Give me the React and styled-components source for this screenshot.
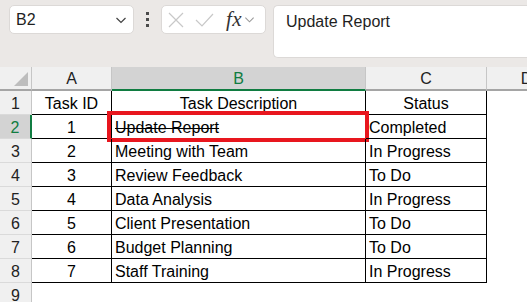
import React from 'react';
import styled, {createGlobalStyle} from 'styled-components';

// Excel-like sheet: formula bar on top, grid of cells below

const GlobalStyle = createGlobalStyle`
  html, body {
    margin: 0;
    padding: 0;
    background: #ffffff;
    overflow: hidden;
  }
  body {
    font-family: "Liberation Sans", Arial, sans-serif;
  }
`

const Page = styled.div`
  width: 527px;
  height: 302px;
  overflow: hidden;
  display: flex;
  flex-direction: column;
`

// ---- formula bar ----

const Toolbar = styled.div`
  height: 67px;
  flex-shrink: 0;
  background: #ebe8e6;
  display: flex;
  align-items: flex-start;
  padding: 5px 0 0 9px;
  box-sizing: border-box;
`

const NameBox = styled.div`
  width: 125px;
  height: 29px;
  box-sizing: border-box;
  background: #fff;
  border: 1px solid #dcd9d7;
  border-radius: 5px;
  display: flex;
  align-items: center;
  justify-content: space-between;
  padding: 1px 6px 0 6px;
  font-size: 16px;
  color: #1f1f1f;
`

const Dots = styled.div`
  width: 27px;
  height: 29px;
  display: flex;
  flex-direction: column;
  align-items: center;
  justify-content: center;
  gap: 3px;

  span {
    width: 3px;
    height: 3px;
    background: #4a4a4a;
  }
`

const FxBox = styled.div`
  width: 105px;
  height: 29px;
  box-sizing: border-box;
  background: #fff;
  border: 1px solid #dcd9d7;
  border-radius: 5px;
  display: flex;
  align-items: center;
  padding-left: 6px;
  gap: 11px;
`

const FxText = styled.span`
  font-family: "Liberation Serif", "Times New Roman", serif;
  font-style: italic;
  font-size: 21px;
  color: #333;
  margin-left: 1px;
  letter-spacing: 0.5px;
`

const FxChevron = styled.span`
  display: flex;
  margin-left: -9px;
`

const FormulaInput = styled.div`
  margin-left: 7px;
  flex: 1;
  height: 53px;
  box-sizing: border-box;
  background: #fff;
  border: 1px solid #dcd9d7;
  border-right: none;
  border-radius: 5px 0 0 5px;
  padding: 7px 12px;
  font-size: 16px;
  color: #1f1f1f;
`

const Chevron = ({color = '#424242', size = 12}) => (
  <svg width={size} height={size} viewBox="0 0 12 12" fill="none">
    <path d="M1.5 4 L6 8.5 L10.5 4" stroke={color} strokeWidth="1.2" />
  </svg>
)

const CancelIcon = () => (
  <svg width="16" height="16" viewBox="0 0 16 16" fill="none">
    <path d="M1 1 L15 15 M15 1 L1 15" stroke="#c8c8c8" strokeWidth="1.2" />
  </svg>
)

const CheckIcon = () => (
  <svg width="19" height="16" viewBox="0 0 19 16" fill="none">
    <path d="M1 8 L7 14 L18 2" stroke="#c8c8c8" strokeWidth="1.2" />
  </svg>
)

// ---- sheet grid ----

const Sheet = styled.div`
  display: grid;
  grid-template-columns: 32px 80px 254px 121px 80px;
  grid-auto-rows: 24px;
  font-size: 16px;
  color: #000;
`

const ColHeader = styled.div`
  background: ${p => p.selected ? '#d3d3d3' : '#f0f0f0'};
  color: ${p => p.selected ? '#107c41' : '#222'};
  border-right: 1px solid #c6c6c6;
  border-bottom: 2px solid ${p => p.selected ? '#107c41' : '#a5a5a5'};
  display: flex;
  align-items: center;
  justify-content: center;
  padding-top: 1px;
  line-height: 1;
`

const Corner = styled.div`
  position: relative;
  background: #f0f0f0;
  border-right: 1px solid #c6c6c6;
  border-bottom: 2px solid #a5a5a5;

  &::after {
    content: "";
    position: absolute;
    right: 3px;
    bottom: 3px;
    border-style: solid;
    border-width: 0 0 14px 14px;
    border-color: transparent transparent #bdbdbd transparent;
  }
`

const RowHeader = styled.div`
  background: ${p => p.selected ? '#d3d3d3' : '#f0f0f0'};
  color: ${p => p.selected ? '#107c41' : '#222'};
  border-right: ${p => p.selected ? '2px solid #107c41' : '1px solid #c6c6c6'};
  border-bottom: 1px solid #dadada;
  display: flex;
  align-items: center;
  justify-content: center;
  padding-top: 2px;
  line-height: 1;
`

const Cell = styled.div`
  position: relative;
  border-right: 1px solid ${p => p.bordered ? '#000' : 'transparent'};
  border-bottom: 1px solid ${p => p.bordered ? '#000' : 'transparent'};
  display: flex;
  align-items: center;
  justify-content: ${p => p.center ? 'center' : 'flex-start'};
  padding: 2px 3px 0;
  white-space: nowrap;
  text-decoration: ${p => p.strike ? 'line-through' : 'none'};
  text-decoration-thickness: 1px;
`

const Highlight = styled.div`
  position: absolute;
  left: -5px;
  top: -4px;
  width: 262px;
  height: 31px;
  box-sizing: border-box;
  border: 4px solid #e8161e;
  pointer-events: none;
`

const rows = [
  {id: 'Task ID', desc: 'Task Description', status: 'Status', head: true},
  {id: '1', desc: 'Update Report', status: 'Completed', strike: true},
  {id: '2', desc: 'Meeting with Team', status: 'In Progress'},
  {id: '3', desc: 'Review Feedback', status: 'To Do'},
  {id: '4', desc: 'Data Analysis', status: 'In Progress'},
  {id: '5', desc: 'Client Presentation', status: 'To Do'},
  {id: '6', desc: 'Budget Planning', status: 'To Do'},
  {id: '7', desc: 'Staff Training', status: 'In Progress'},
];

export default function App() {
  return (
    <Page>
      <GlobalStyle />
      <Toolbar>
        <NameBox>
          <span>B2</span>
          <Chevron />
        </NameBox>
        <Dots><span /><span /><span /></Dots>
        <FxBox>
          <CancelIcon />
          <CheckIcon />
          <FxText>fx</FxText>
          <FxChevron><Chevron color="#9a9a9a" size={11} /></FxChevron>
        </FxBox>
        <FormulaInput>Update Report</FormulaInput>
      </Toolbar>

      <Sheet>
        <Corner />
        <ColHeader>A</ColHeader>
        <ColHeader selected>B</ColHeader>
        <ColHeader>C</ColHeader>
        <ColHeader>D</ColHeader>

        {rows.map((row, i) => (
          <React.Fragment key={i}>
            <RowHeader selected={i === 1}>{i + 1}</RowHeader>
            <Cell bordered center>{row.id}</Cell>
            <Cell bordered center={row.head} strike={row.strike}>
              {row.desc}
              {row.strike && <Highlight />}
            </Cell>
            <Cell bordered center={row.head}>{row.status}</Cell>
            <Cell />
          </React.Fragment>
        ))}

        <RowHeader>9</RowHeader>
        <Cell />
        <Cell />
        <Cell />
        <Cell />
      </Sheet>
    </Page>
  );
}
